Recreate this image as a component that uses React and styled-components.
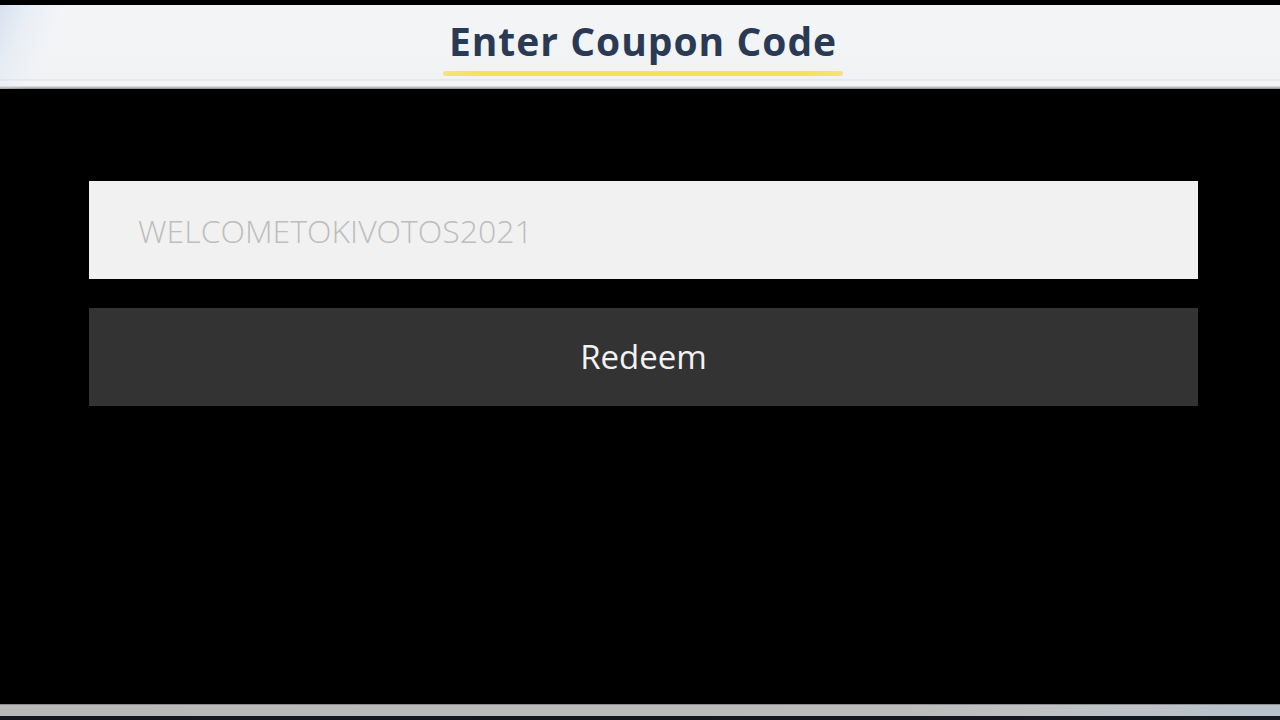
import React from "react";
import styled, { createGlobalStyle } from "styled-components";

const Global = createGlobalStyle`
  html, body { margin: 0; padding: 0; background: #000; }
  body { font-family: "Open Sans", "Noto Sans", sans-serif; }
  * { box-sizing: border-box; }
`;

const Page = styled.div`
  width: 1280px;
  height: 720px;
  display: flex;
  flex-direction: column;
  background: #000;
  padding-top: 5px;
  overflow: hidden;
`;

const Header = styled.header`
  height: 84px;
  flex: none;
  display: flex;
  justify-content: center;
  align-items: flex-start;
  padding-left: 6px;
  background:
    linear-gradient(115deg, rgba(190, 210, 235, 0.55) 0px, rgba(215, 228, 242, 0.35) 30px, rgba(242, 243, 245, 0) 60px),
    linear-gradient(180deg, #f4f5f7 0%, #f1f2f4 88%, #e2e3e6 89%, #f3f4f6 91%, #f3f4f6 96%, #8a8a8a 100%);
`;

const TitleWrap = styled.div`
  display: flex;
  flex-direction: column;
  align-items: center;
  margin-top: 11px;
`;

const Title = styled.h1`
  margin: 0;
  font-family: "Open Sans", "Noto Sans", sans-serif;
  font-weight: 700;
  font-size: 39px;
  line-height: 50px;
  color: #2a3a54;
  letter-spacing: 1px;
`;

const Underline = styled.div`
  width: 400px;
  height: 5px;
  margin-top: 5px;
  border-radius: 3px;
  background: linear-gradient(90deg, rgba(245, 222, 70, 0.7), #f6e15a 10%, #f6e15a 90%, rgba(245, 222, 70, 0.7));
`;

const Main = styled.main`
  flex: 1;
  display: flex;
  flex-direction: column;
  gap: 29px;
  padding: 92px 82px 0 89px;
`;

const CodeInput = styled.input`
  width: 100%;
  height: 98px;
  border: none;
  outline: none;
  background: #f1f1f1;
  padding: 0 0 0 49px;
  font-family: "Open Sans", "Noto Sans", sans-serif;
  font-weight: 300;
  font-size: 32px;
  color: #444;
  &::placeholder {
    color: #bdbdbd;
  }
`;

const RedeemButton = styled.button`
  width: 100%;
  height: 98px;
  border: none;
  background: #333333;
  color: #f2f2f2;
  font-family: "Open Sans", "Noto Sans", sans-serif;
  font-weight: 400;
  font-size: 33px;
  cursor: pointer;
  padding: 0 0 2px 0;
`;

const FooterStrip = styled.div`
  flex: none;
  height: 12px;
  background: linear-gradient(90deg, #b9b9b9 0%, #bcbcbc 70%, #c0c3c6 85%, #b6c2cd 100%);
  border-top: 1px solid #8d8d8d;
`;

const FooterEdge = styled.div`
  flex: none;
  height: 4px;
  background: #141820;
`;

export default function App() {
  return (
    <>
      <Global />
      <Page>
        <Header>
          <TitleWrap>
            <Title>Enter Coupon Code</Title>
            <Underline />
          </TitleWrap>
        </Header>
        <Main>
          <CodeInput placeholder="WELCOMETOKIVOTOS2021" />
          <RedeemButton>Redeem</RedeemButton>
        </Main>
        <FooterStrip />
        <FooterEdge />
      </Page>
    </>
  );
}
